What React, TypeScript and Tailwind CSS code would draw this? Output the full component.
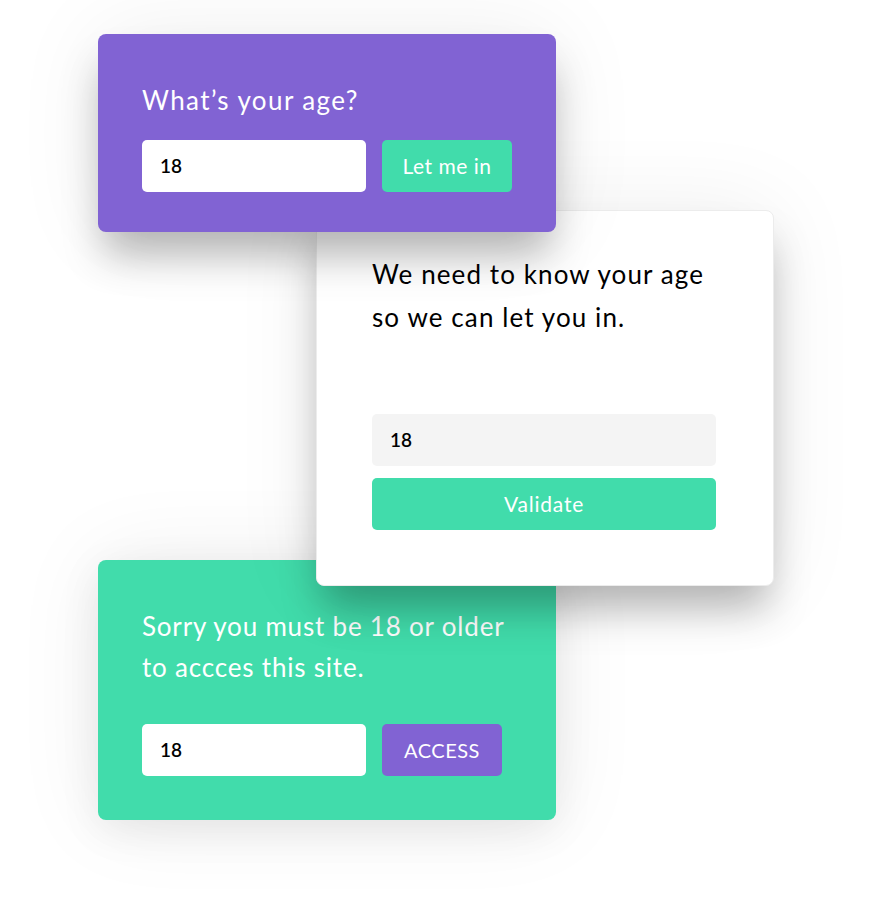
const font = { fontFamily: 'Lato, "Open Sans", sans-serif' }

const AgeInput = ({ value, tone = 'white' }: { value: string; tone?: 'white' | 'gray' }) => (
  <div
    className={`h-[52px] rounded-[5px] flex items-center pl-[18px] text-[19px] font-semibold text-black ${
      tone === 'gray' ? 'bg-[#f4f4f4]' : 'bg-white'
    }`}
  >
    {value}
  </div>
)

export default function App() {
  return (
    <div className="w-[874px] h-[900px] bg-white overflow-hidden flex flex-col" style={font}>
      {/* purple card — sits on top */}
      <div className="relative z-30 ml-[98px] mt-[34px] w-[458px] h-[198px] rounded-[8px] bg-[#8163d3] px-[44px] pt-[49px] shadow-[0_28px_40px_-6px_rgba(0,0,0,0.28),0_0_90px_rgba(0,0,0,0.07)]">
        <div className="text-[26px] leading-[34px] text-white tracking-[1.4px]">What’s your age?</div>
        <div className="flex gap-4 mt-[23px]">
          <div className="w-[224px]">
            <AgeInput value="18" />
          </div>
          <div className="w-[130px] h-[52px] rounded-[5px] bg-[#41dcab] flex items-center justify-center text-white text-[21px] tracking-[0.5px]">
            Let me in
          </div>
        </div>
      </div>

      {/* white card — middle layer */}
      <div className="relative z-20 ml-[316px] mt-[-22px] w-[458px] h-[376px] rounded-[8px] bg-white border border-[#ececec] px-[55px] pt-[42px] shadow-[0_28px_40px_-6px_rgba(0,0,0,0.28),0_0_90px_rgba(0,0,0,0.07)]">
        <div className="text-[26px] leading-[43px] text-black tracking-[1.1px]">
          We need to know your age
          <br />
          so we can let you in.
        </div>
        <div className="mt-[75px] w-[344px] flex flex-col gap-3">
          <AgeInput value="18" tone="gray" />
          <div className="h-[52px] rounded-[5px] bg-[#41dcab] flex items-center justify-center text-white text-[21px] tracking-[0.8px]">
            Validate
          </div>
        </div>
      </div>

      {/* green card — bottom layer */}
      <div className="relative z-10 ml-[98px] mt-[-26px] w-[458px] h-[260px] rounded-[8px] bg-[#41dcab] px-[44px] pt-[46px] shadow-[0_10px_40px_rgba(0,0,0,0.08),0_0_90px_rgba(0,0,0,0.07)]">
        <div className="text-[26px] leading-[41px] text-white tracking-[0.8px]">
          Sorry you must be 18 or older
          <br />
          to accces this site.
        </div>
        <div className="flex gap-4 mt-[36px]">
          <div className="w-[224px]">
            <AgeInput value="18" />
          </div>
          <div className="w-[120px] h-[52px] rounded-[5px] bg-[#8163d3] flex items-center justify-center text-white text-[20px] tracking-[0.5px]">
            ACCESS
          </div>
        </div>
      </div>
    </div>
  )
}
